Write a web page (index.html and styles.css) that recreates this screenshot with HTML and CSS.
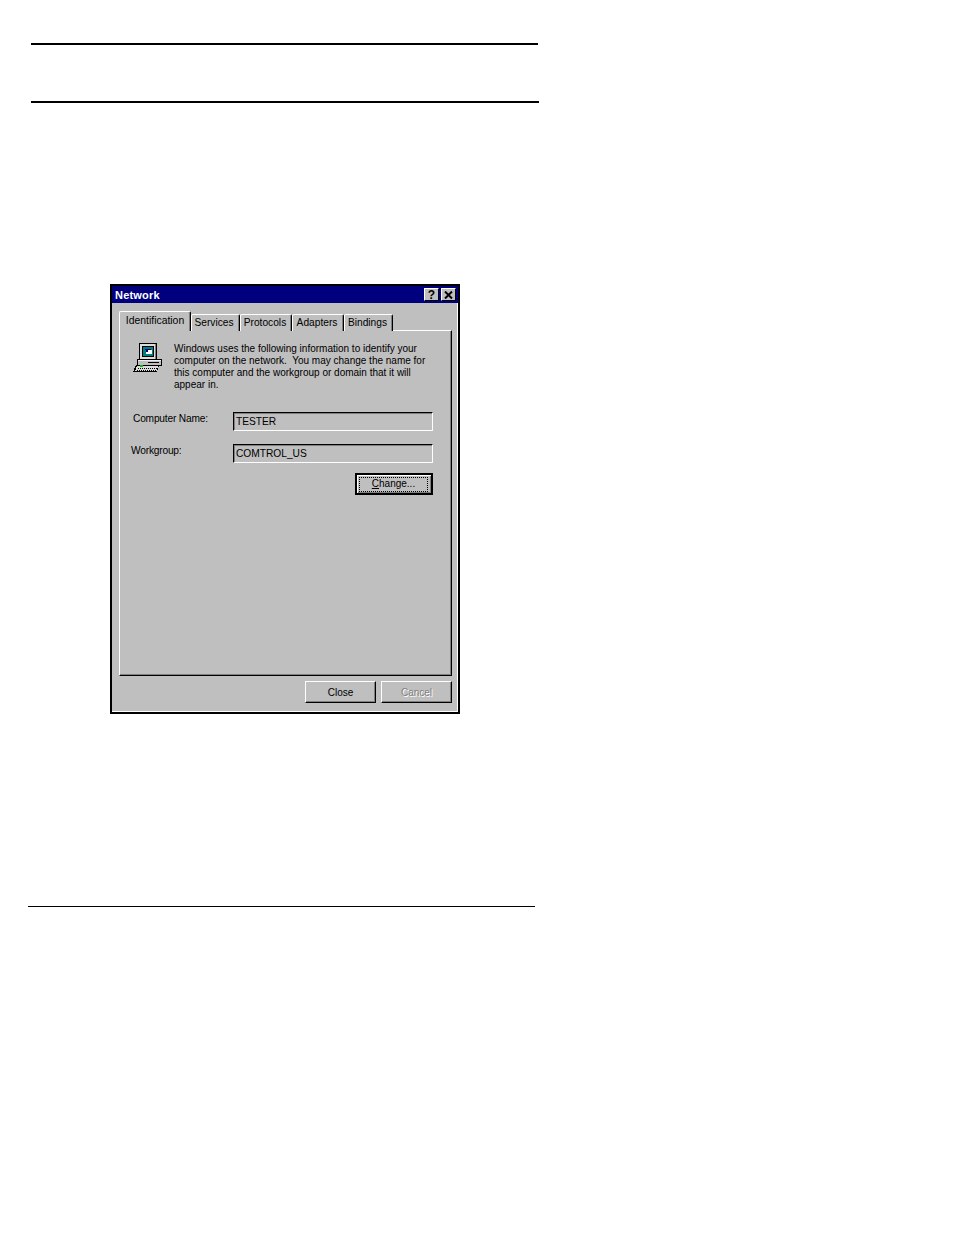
FILE: index.html
```html
<!DOCTYPE html>
<html lang="en">
<head>
  <meta charset="UTF-8">
  <title>Network</title>
  <link rel="stylesheet" href="styles.css">
</head>
<body>
<div class="pagina">
  <div class="regla regla-1"></div>
  <div class="regla regla-2"></div>

  <div class="dialogo">
    <div class="titulo">
      <span class="titulo-texto">Network</span>
      <div class="titulo-botones">
        <div class="btn-mini">?</div>
        <div class="btn-mini">
          <svg width="9" height="8" viewBox="0 0 9 8">
            <path d="M1 0.5L8 7.5M8 0.5L1 7.5" stroke="#000" stroke-width="2" fill="none"/>
          </svg>
        </div>
      </div>
    </div>

    <div class="pestanas">
      <div class="pestana activa">Identification</div>
      <div class="pestana p-services">Services</div>
      <div class="pestana p-protocols">Protocols</div>
      <div class="pestana p-adapters">Adapters</div>
      <div class="pestana p-bindings">Bindings</div>
    </div>

    <div class="panel">
      <div class="intro">
        <svg class="icono" width="30" height="32" viewBox="0 0 30 32" shape-rendering="crispEdges">
          <!-- monitor -->
          <rect x="6" y="2" width="18" height="17" fill="#000"/>
          <rect x="7" y="3" width="15" height="15" fill="#dcdcdc"/>
          <rect x="22" y="3" width="1" height="15" fill="#7f7f7f"/>
          <rect x="9" y="5" width="12" height="11" fill="#000"/>
          <rect x="10" y="6" width="10" height="9" fill="#007f7f"/>
          <rect x="12" y="8" width="6" height="1" fill="#000080"/>
          <rect x="13" y="9" width="6" height="4" fill="#fff"/>
          <rect x="13" y="9" width="2" height="2" fill="#00007f"/>
          <!-- base -->
          <rect x="4" y="18" width="25" height="7" fill="#000"/>
          <rect x="5" y="19" width="23" height="5" fill="#bfbfbf"/>
          <rect x="5" y="19" width="23" height="1" fill="#eeeeee"/>
          <rect x="15" y="21" width="11" height="1" fill="#000"/>
          <!-- teclado -->
          <path d="M3 24h23l-2 7H0z" fill="#000"/>
          <path d="M4 25h21l-1 5H2z" fill="#dcdcdc"/>
          <rect x="7" y="24" width="3" height="2" fill="#00c000"/>
          <path d="M5 27h1M7 27h1M9 27h1M11 27h1M13 27h1M15 27h1M17 27h1M19 27h1M21 27h1M23 27h1" stroke="#000" stroke-width="1"/>
          <path d="M4 29h1M6 29h1M8 29h1M10 29h1M12 29h1M14 29h1M16 29h1M18 29h1M20 29h1M22 29h1" stroke="#000" stroke-width="1"/>
        </svg>
        <p class="intro-texto">Windows uses the following information to identify your<br>computer on the network.&nbsp; You may change the name for<br>this computer and the workgroup or domain that it will<br>appear in.</p>
      </div>

      <div class="fila fila-nombre">
        <label>Computer Name:</label>
        <div class="campo">TESTER</div>
      </div>
      <div class="fila fila-grupo">
        <label>Workgroup:</label>
        <div class="campo">COMTROL_US</div>
      </div>

      <button class="boton boton-change"><span class="foco"><u>C</u>hange...</span></button>
    </div>

    <div class="botones">
      <button class="boton">Close</button>
      <button class="boton inactivo">Cancel</button>
    </div>
  </div>

  <div class="regla regla-3"></div>
</div>
</body>
</html>
```

FILE: styles.css
```css
body {
  margin: 0;
  background-color: #fff;
  font-family: "Liberation Sans", Arial, sans-serif;
}

.pagina {
  height: 1235px;
  padding-top: 43px;
  box-sizing: border-box;
  overflow: hidden;
}

.regla {
  background-color: #000;
}

.regla-1 {
  width: 507px;
  height: 2px;
  margin-left: 31px;
}

.regla-2 {
  width: 508px;
  height: 2px;
  margin: 56px 0 0 31px;
}

.regla-3 {
  width: 507px;
  height: 1px;
  margin: 192px 0 0 28px;
}

.dialogo {
  width: 350px;
  height: 430px;
  margin: 181px 0 0 110px;
  box-sizing: border-box;
  border: 2px solid #000;
  background-color: #bfbfbf;
  box-shadow: inset -1px -1px 0 #fff;
  font-size: 10px;
  color: #000;
}

.titulo {
  display: flex;
  justify-content: space-between;
  align-items: center;
  height: 17px;
  padding: 0 2px 0 3px;
  background-color: #00007f;
}

.titulo-texto {
  color: #fff;
  font-size: 11px;
  font-weight: bold;
  letter-spacing: 0.2px;
}

.titulo-botones {
  display: flex;
  gap: 2px;
}

.btn-mini {
  display: flex;
  justify-content: center;
  align-items: center;
  width: 15px;
  height: 13px;
  box-sizing: border-box;
  background-color: #bfbfbf;
  border: 1px solid;
  border-color: #fff #000 #000 #fff;
  font-size: 12px;
  font-weight: bold;
}

.pestanas {
  display: flex;
  align-items: flex-end;
  height: 20px;
  margin: 8px 0 -1px 7px;
}

.pestana {
  position: relative;
  height: 17px;
  box-sizing: border-box;
  padding: 1px 2px 0 0;
  text-align: center;
  font-size: 10.2px;
  line-height: 13px;
  background-color: #bfbfbf;
  border-top: 1px solid #fff;
  border-left: 1px solid #fff;
  border-right: 1px solid #000;
  box-shadow: inset -1px 0 0 #7f7f7f;
  border-radius: 2px 2px 0 0;
}

.pestana.activa {
  z-index: 1;
  width: 72px;
  height: 20px;
  margin-bottom: 0;
  font-size: 10.4px;
  line-height: 15px;
  padding: 1px 0 0 0;
}

.p-services { width: 49px; padding-right: 3px; }
.p-protocols { width: 52px; }
.p-adapters { width: 52px; }
.p-bindings { width: 49px; }

.panel {
  width: 333px;
  height: 346px;
  margin-left: 7px;
  padding: 10px 0 0 13px;
  box-sizing: border-box;
  border: 1px solid;
  border-color: #fff #000 #000 #fff;
  box-shadow: inset -1px -1px 0 #7f7f7f;
}

.intro {
  display: flex;
  gap: 11px;
  height: 50px;
  margin-bottom: 21px;
}

.intro-texto {
  width: 254px;
  margin: 2px 0 0 0;
  line-height: 12px;
  white-space: nowrap;
  overflow: hidden;
}

.fila {
  display: flex;
  align-items: flex-start;
  margin-bottom: 13px;
}

.fila label {
  padding-top: 1px;
  font-size: 10.2px;
  letter-spacing: -0.2px;
  line-height: 12px;
}

.fila-nombre label {
  width: 100px;
}

.fila-grupo label {
  width: 102px;
  margin-left: -2px;
}

.campo {
  width: 200px;
  height: 19px;
  box-sizing: border-box;
  padding-left: 2px;
  font-size: 10.2px;
  line-height: 17px;
  border: 1px solid;
  border-color: #000 #fff #fff #000;
  box-shadow: inset 1px 1px 0 #7f7f7f;
}

.boton {
  width: 71px;
  height: 22px;
  padding: 0;
  box-sizing: border-box;
  background-color: #bfbfbf;
  border: 1px solid;
  border-color: #fff #000 #000 #fff;
  box-shadow: inset -1px -1px 0 #7f7f7f;
  font-family: inherit;
  font-size: 10px;
  color: #000;
}

.boton-change {
  display: block;
  width: 78px;
  margin: -3px 0 0 222px;
  padding: 1px 2px 2px 1px;
  border: 2px solid #000;
  box-shadow: inset 1px 1px 0 #fff, inset -1px -1px 0 #7f7f7f;
}

.foco {
  display: block;
  height: 100%;
  margin: 1px;
  line-height: 12px;
  border: 1px dotted #000;
  box-sizing: border-box;
}

.botones {
  display: flex;
  justify-content: flex-end;
  gap: 5px;
  margin: 5px 6px 0 0;
}

.inactivo {
  color: #7f7f7f;
  text-shadow: 1px 1px 0 #fff;
}
```
